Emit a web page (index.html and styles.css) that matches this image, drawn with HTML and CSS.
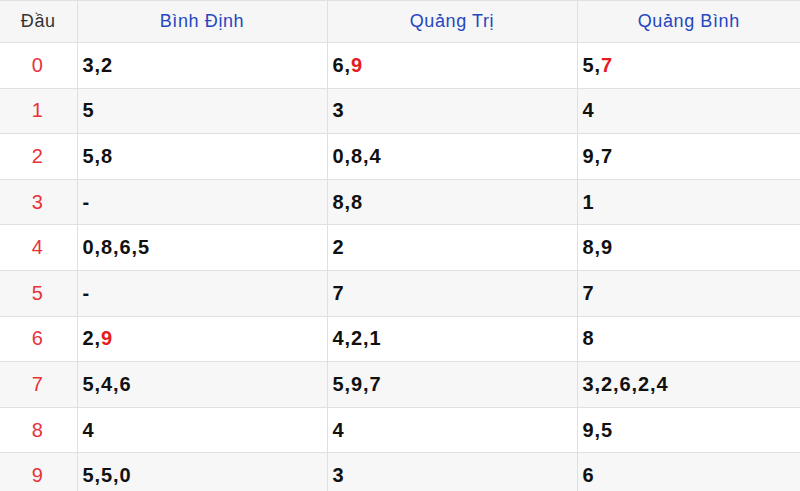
FILE: index.html
```html
<!DOCTYPE html>
<html lang="vi">
<head>
<meta charset="utf-8">
<link rel="stylesheet" href="styles.css">
</head>
<body>
<table class="kq">
  <colgroup>
    <col class="c-dau"><col class="c-prov"><col class="c-prov"><col class="c-last">
  </colgroup>
  <thead>
    <tr><th class="dau-h">Đầu</th><th>Bình Định</th><th>Quảng Trị</th><th>Quảng Bình</th></tr>
  </thead>
  <tbody>
    <tr><td class="dau">0</td><td>3,2</td><td>6,<span class="r">9</span></td><td>5,<span class="r">7</span></td></tr>
    <tr><td class="dau">1</td><td>5</td><td>3</td><td>4</td></tr>
    <tr><td class="dau">2</td><td>5,8</td><td>0,8,4</td><td>9,7</td></tr>
    <tr><td class="dau">3</td><td>-</td><td>8,8</td><td>1</td></tr>
    <tr><td class="dau">4</td><td>0,8,6,5</td><td>2</td><td>8,9</td></tr>
    <tr><td class="dau">5</td><td>-</td><td>7</td><td>7</td></tr>
    <tr><td class="dau">6</td><td>2,<span class="r">9</span></td><td>4,2,1</td><td>8</td></tr>
    <tr><td class="dau">7</td><td>5,4,6</td><td>5,9,7</td><td>3,2,6,2,4</td></tr>
    <tr><td class="dau">8</td><td>4</td><td>4</td><td>9,5</td></tr>
    <tr><td class="dau">9</td><td>5,5,0</td><td>3</td><td>6</td></tr>
  </tbody>
</table>
</body>
</html>
```
FILE: styles.css
```css
html, body {
  margin: 0;
  padding: 0;
  background: #fff;
  overflow: hidden;
}
.kq {
  border-collapse: collapse;
  table-layout: fixed;
  width: 800px;
  font-family: "Liberation Sans", Arial, sans-serif;
}
.c-dau { width: 77px; }
.c-prov { width: 250px; }
.c-last { width: 223px; }
.kq th, .kq td {
  border: 1px solid #dfdfe4;
  padding: 0 5px;
}
.kq tr > :first-child { border-left: none; }
.kq tr > :last-child { border-right: none; }
.kq th {
  height: 41px;
  background: #f6f6f6;
  color: #2547c0;
  font-weight: normal;
  font-size: 18px;
  letter-spacing: 0.6px;
  text-align: center;
}
.kq th.dau-h { color: #333; }
.kq td {
  height: 44.6px;
  font-size: 20px;
  letter-spacing: 0.9px;
  font-weight: bold;
  color: #111;
}
.kq tbody tr:nth-child(even) td { background: #f7f7f7; }
.kq td.dau {
  text-align: center;
  color: #e8323a;
  font-weight: normal;
  font-size: 20px;
  letter-spacing: 0;
  padding-left: 3px;
}
.r { color: #e51c23; }
```
